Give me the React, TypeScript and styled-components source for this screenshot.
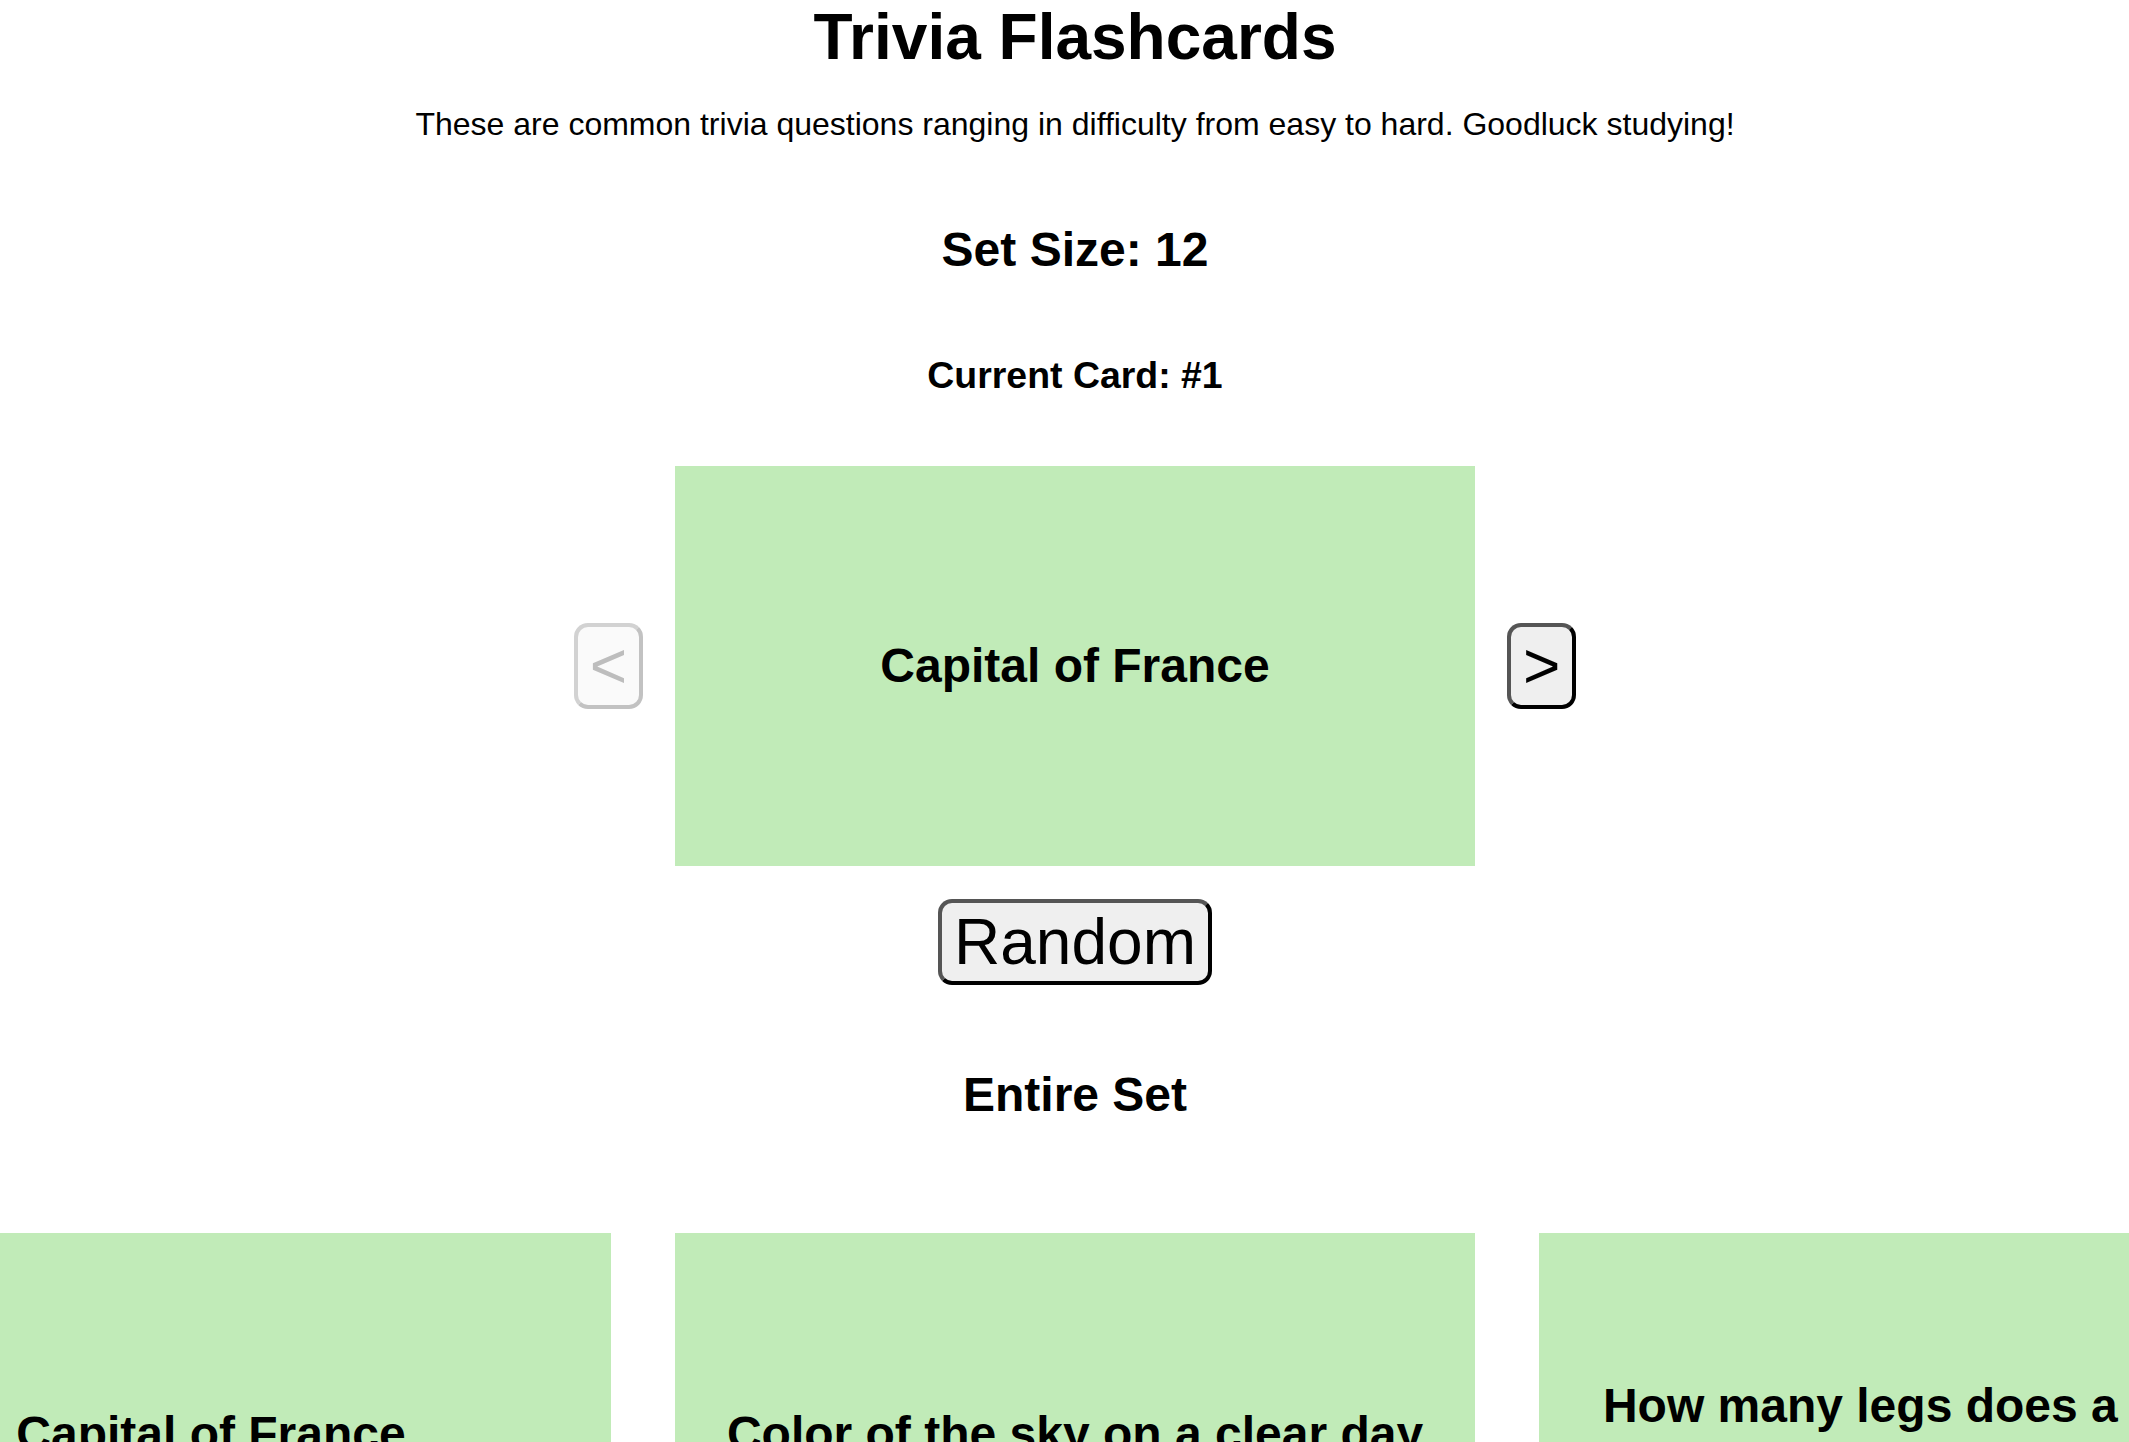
import { useState } from "react";
import { styled, createGlobalStyle } from "styled-components";

const cards = [
    { question: "Capital of France", answer: "Paris" },
    { question: "Color of the sky on a clear day", answer: "Blue" },
    { question: "How many legs does a spider have?", answer: "8" },
    { question: "Largest planet in our solar system", answer: "Jupiter" },
    { question: "Who painted the Mona Lisa?", answer: "Leonardo da Vinci" },
    { question: "Chemical symbol for gold", answer: "Au" },
    { question: "How many continents are there?", answer: "7" },
    { question: "Longest river in the world", answer: "The Nile" },
    { question: "Year the Titanic sank", answer: "1912" },
    { question: "Smallest prime number", answer: "2" },
    { question: "Hardest natural substance", answer: "Diamond" },
    { question: "Author of Hamlet", answer: "William Shakespeare" },
];

const GlobalStyle = createGlobalStyle`
    html, body {
        margin: 0;
        background: #ffffff;
        overflow-x: hidden;
    }
    body {
        font-family: "Liberation Sans", Arial, sans-serif;
        color: #000000;
    }
`;

function App() {
    const [index, setIndex] = useState(0);
    const [flipped, setFlipped] = useState(false);

    const goTo = (next: number) => {
        setIndex(next);
        setFlipped(false);
    };

    const randomCard = () => {
        goTo(Math.floor(Math.random() * cards.length));
    };

    return (
        <>
            <GlobalStyle />
            <S.Page>
                <S.Title>Trivia Flashcards</S.Title>
                <S.Subtitle>
                    These are common trivia questions ranging in difficulty from easy to hard. Goodluck studying!
                </S.Subtitle>
                <S.SetSize>Set Size: {cards.length}</S.SetSize>
                <S.CurrentCard>Current Card: #{index + 1}</S.CurrentCard>

                <S.CardRow>
                    <S.NavButton disabled={index === 0} onClick={() => goTo(index - 1)}>
                        &lt;
                    </S.NavButton>
                    <S.Card onClick={() => setFlipped(!flipped)}>
                        <S.CardText>{flipped ? cards[index].answer : cards[index].question}</S.CardText>
                    </S.Card>
                    <S.NavButton disabled={index === cards.length - 1} onClick={() => goTo(index + 1)}>
                        &gt;
                    </S.NavButton>
                </S.CardRow>

                <S.RandomButton onClick={randomCard}>Random</S.RandomButton>

                <S.SectionTitle>Entire Set</S.SectionTitle>
                <S.GridWrap>
                    <S.Grid>
                        {cards.map((card) => (
                            <S.Card key={card.question}>
                                <S.CardText>{card.question}</S.CardText>
                            </S.Card>
                        ))}
                    </S.Grid>
                </S.GridWrap>
            </S.Page>
        </>
    );
}

const S = {
    Page: styled.div`
        padding-left: 21px;
        text-align: center;
        overflow-x: clip;
    `,
    Title: styled.h1`
        margin: 0;
        font-size: 64px;
        font-weight: 700;
    `,
    Subtitle: styled.p`
        margin: 32px 0 0;
        font-size: 32px;
    `,
    SetSize: styled.h2`
        margin: 79px 0 0;
        font-size: 48px;
        font-weight: 700;
    `,
    CurrentCard: styled.h3`
        margin: 77px 0 0;
        font-size: 37.44px;
        font-weight: 700;
    `,
    CardRow: styled.div`
        display: flex;
        align-items: center;
        justify-content: center;
        gap: 32px;
        margin-top: 68.75px;
    `,
    Card: styled.div`
        display: flex;
        align-items: center;
        justify-content: center;
        flex-shrink: 0;
        width: 800px;
        height: 400px;
        background: #c1ebb8;
        cursor: pointer;
    `,
    CardText: styled.h2`
        margin: 0;
        font-size: 48px;
        font-weight: 700;
        line-height: normal;
    `,
    NavButton: styled.button`
        font-family: "Liberation Sans", Arial, sans-serif;
        font-size: 64px;
        line-height: normal;
        padding: 2px 12px;
        border: 4px solid;
        border-color: #555555 #000000 #000000 #555555;
        border-radius: 14px;
        background: #efefef;
        color: #000000;
        cursor: pointer;

        &:disabled {
            background: #fafafa;
            border-color: #d2d2d2 #c2c2c2 #c2c2c2 #d2d2d2;
            color: #bdbdbd;
            cursor: default;
        }
    `,
    RandomButton: styled.button`
        display: block;
        margin: 33px auto 0;
        font-family: "Liberation Sans", Arial, sans-serif;
        font-size: 64px;
        line-height: normal;
        padding: 2px 12px;
        border: 4px solid;
        border-color: #555555 #000000 #000000 #555555;
        border-radius: 14px;
        background: #efefef;
        color: #000000;
        cursor: pointer;
    `,
    SectionTitle: styled.h2`
        margin: 82px 0 0;
        font-size: 48px;
        font-weight: 700;
    `,
    GridWrap: styled.div`
        display: flex;
        justify-content: center;
        margin-top: 111.5px;
        padding-bottom: 64px;
    `,
    Grid: styled.div`
        display: grid;
        flex-shrink: 0;
        grid-template-columns: repeat(3, 800px);
        gap: 64px;
    `,
};

export default App;
